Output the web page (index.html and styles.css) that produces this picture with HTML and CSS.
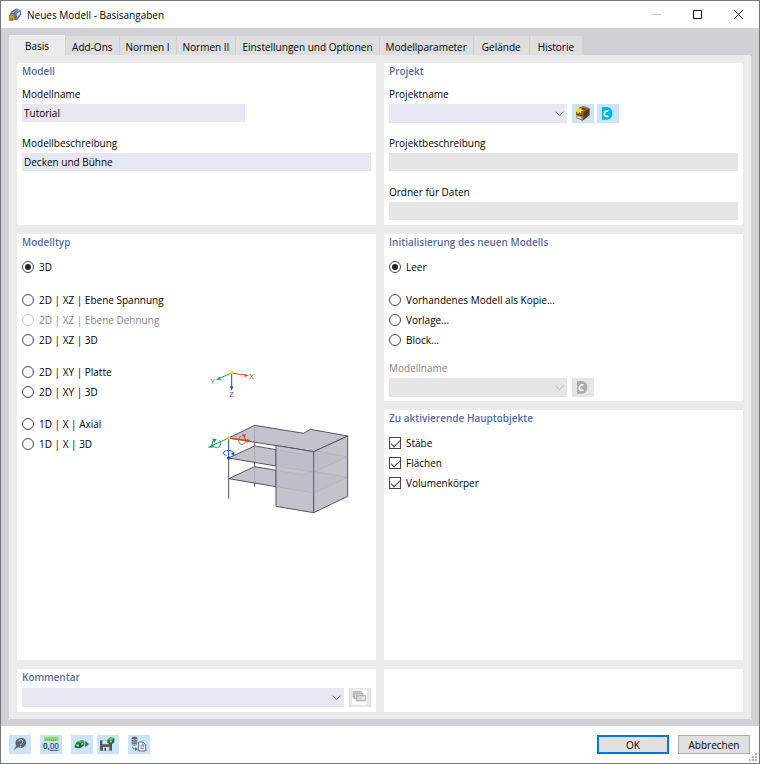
FILE: index.html
```html
<!DOCTYPE html>
<html lang="de">
<head>
<meta charset="utf-8">
<title>Neues Modell - Basisangaben</title>
<link rel="stylesheet" href="styles.css">
</head>
<body>
<div class="window">
  <header class="titlebar">
    <svg class="app-icon" viewBox="0 0 42 42" aria-hidden="true">
      <path d="M8 12 25 1l12 5 3 13-13 18-9-2L5 25z" fill="#526d96"/>
      <path d="M9 13 25 2l11 5-15 10z" fill="#91aaca"/>
      <path d="M22 18 36 8l3 11-12 17z" fill="#6884ae"/>
      <path d="m26 17 9-6 1 7-8 10z" fill="#d7e2ee"/>
      <path d="m12 13 12-8M17 16 29 7" stroke="#314b71" stroke-width="2"/>
      <path d="M2 24c4-7 13-8 17-3v15c-5 5-12 5-17 1z" fill="#d2a126"/>
      <path d="M5 24c3-3 8-3 11 0M7 31h7v5H7z" fill="none" stroke="#7c5a13" stroke-width="2"/>
    </svg>
    <h1>Neues Modell - Basisangaben</h1>
    <div class="window-controls">
      <button type="button" aria-label="Minimieren" disabled><svg viewBox="0 0 11 11"><path d="M1 5.500h9" stroke="#ccc"/></svg></button>
      <button type="button" aria-label="Maximieren"><svg viewBox="0 0 11 11"><path d="M1.500 1.500h8v8h-8z" fill="none" stroke="#111"/></svg></button>
      <button type="button" aria-label="Schließen"><svg viewBox="0 0 11 11"><path d="m1 1 9 9M10 1l-9 9" stroke="#111"/></svg></button>
    </div>
  </header>

  <main class="workspace">
    <nav class="tabs" role="tablist">
      <button type="button" role="tab" class="tab tab-active" aria-selected="true">Basis</button>
      <button type="button" role="tab" class="tab">Add-Ons</button>
      <button type="button" role="tab" class="tab">Normen I</button>
      <button type="button" role="tab" class="tab">Normen II</button>
      <button type="button" role="tab" class="tab">Einstellungen und Optionen</button>
      <button type="button" role="tab" class="tab">Modellparameter</button>
      <button type="button" role="tab" class="tab tab-wide">Gelände</button>
      <button type="button" role="tab" class="tab tab-wide">Historie</button>
    </nav>
    <div class="page">
      <div class="column">
        <section class="panel panel-top">
          <h2>Modell</h2>
          <div class="fields">
            <div class="field field-short"><label for="name">Modellname</label><input id="name" type="text" value="Tutorial"></div>
            <div class="field"><label for="desc">Modellbeschreibung</label><input id="desc" type="text" value="Decken und Bühne"></div>
          </div>
        </section>
        <section class="panel panel-grow">
          <h2>Modelltyp</h2>
          <div class="type-body">
            <div class="options">
              <div class="group group-first">
                <label class="option"><input type="radio" name="type" checked>3D</label>
              </div>
              <div class="group">
                <label class="option"><input type="radio" name="type">2D | XZ | Ebene Spannung</label>
                <label class="option option-disabled"><input type="radio" name="type" disabled>2D | XZ | Ebene Dehnung</label>
                <label class="option"><input type="radio" name="type">2D | XZ | 3D</label>
              </div>
              <div class="group">
                <label class="option"><input type="radio" name="type">2D | XY | Platte</label>
                <label class="option"><input type="radio" name="type">2D | XY | 3D</label>
              </div>
              <div class="group">
                <label class="option"><input type="radio" name="type">1D | X | Axial</label>
                <label class="option"><input type="radio" name="type">1D | X | 3D</label>
              </div>
            </div>
            <svg class="preview" viewBox="0 0 480 480" role="img" aria-label="Modellvorschau">
              <g fill="none" stroke-width="3">
                <path d="M95 39 60 54" stroke="#14a54e"/>
                <path d="m95 39 40 6" stroke="#d84a1f"/>
                <path d="M95 39v42" stroke="#1f49cf"/>
              </g>
              <path d="m48 60 11-10 4 9z" fill="#14a54e"/>
              <path d="m146 47-13 4 1-10z" fill="#d84a1f"/>
              <path d="m95 92-5-13h10z" fill="#1f49cf"/>
              <circle cx="95" cy="38" r="5" fill="#f5d800"/>
              <g class="axis-text">
                <text x="31" y="71" fill="#14a54e">Y</text>
                <text x="148" y="56" fill="#d84a1f">X</text>
                <text x="88" y="112" fill="#1f49cf">Z</text>
              </g>
              <path d="M164 196v184M86 356v60" stroke="#55556c" stroke-width="3"/>
              <g fill="#b9b8c3" fill-opacity=".85" stroke="#55556c" stroke-width="3" stroke-linejoin="round">
                <path d="m86 356 78-36 64 11v49z"/>
                <path d="m86 294 78-36 64 11v49z"/>
                <path d="m86 234 78-38 147 24 20-12 112 20-102 47z"/>
                <path d="m228 256 113 19v183l-113-19z"/>
                <path d="m341 275 102-47v181l-102 49z"/>
              </g>
              <g fill="#a3a2b2" fill-opacity=".15" stroke="#8e8d9e" stroke-opacity=".3" stroke-width="2">
                <path d="m228 269 83 13 20-12 112 20-102 47-113-19z"/>
                <path d="m228 331 83 13 20-12 112 20-102 47-113-19z"/>
              </g>
              <path d="M86 234v60" stroke="#1f49cf" stroke-width="3"/>
              <path d="M86 294v62" stroke="#55556c" stroke-width="3"/>
              <path d="M86 234 36 257" stroke="#14a54e" stroke-width="3"/>
              <path d="m86 234 60 8" stroke="#d84a1f" stroke-width="4"/>
              <path d="m24 264 12-12 5 10z" fill="#14a54e"/>
              <path d="m153 244-14 4 2-11z" fill="#d84a1f"/>
              <path d="M39 241c-6 11 0 22 10 22 12 0 17-14 9-22" fill="none" stroke="#14a54e" stroke-width="3"/>
              <path d="m36 236 14 1-7 11z" fill="#14a54e"/>
              <path d="M122 228c-8 10-7 25 3 25 10 1 16-12 10-18" fill="none" stroke="#d84a1f" stroke-width="3"/>
              <path d="m125 224 12-2-2 14z" fill="#d84a1f"/>
              <path d="M80 286c-14-2-14-11 0-14 10-2 19 1 21 7" fill="none" stroke="#1f49cf" stroke-width="3"/>
              <path d="m92 281 11-5v12z" fill="#1f49cf"/>
              <circle cx="86" cy="294" r="5" fill="#1f49cf"/>
              <circle cx="86" cy="234" r="5" fill="#f5d800"/>
            </svg>
          </div>
        </section>
        <section class="panel panel-bottom">
          <h2><label for="comment">Kommentar</label></h2>
          <div class="combo-row">
            <div class="combo combo-grow"><select id="comment"><option></option></select><svg viewBox="0 0 9 6"><path d="m.5.700 4 4 4-4"/></svg></div>
            <button type="button" class="icon-button icon-button-disabled" aria-label="Kommentare" disabled>
              <svg viewBox="0 0 66 57">
                <path d="M9 5h45v45H9z" fill="#fff"/>
                <g fill="#d4d4d4" stroke="#999" stroke-width="2"><path d="M12 10h25v17H12z"/><path d="M16 16h26v17H16z"/><path d="M23 22h27v17H23z"/></g>
                <path d="M39 28h8v7h-8z" fill="#eee"/>
              </svg>
            </button>
          </div>
        </section>
      </div>

      <div class="column">
        <section class="panel panel-top">
          <h2>Projekt</h2>
          <div class="fields">
            <div class="field">
              <label for="project">Projektname</label>
              <div class="combo-row">
                <div class="combo"><select id="project"><option></option></select><svg viewBox="0 0 9 6"><path d="m.5.700 4 4 4-4"/></svg></div>
                <button type="button" class="icon-button" aria-label="Neues Projekt">
                  <svg viewBox="0 0 66 57">
                    <path d="m12 23 19-15 22 6v20L32 50 12 42z" fill="#8c6536"/>
                    <path d="m22 10 13-4 17 6-17 11-16-6z" fill="#9c7443"/>
                    <path d="m35 23 17-10v20L34 48z" fill="#5a4023"/>
                    <path d="m12 30 20 5v13l-20-6z" fill="#c5a06a"/>
                    <path d="m13 31 19 5M37 30l14-9M26 12l16 4" stroke="#3d2b17" stroke-width="3"/>
                    <path d="m16 37 10 3v4l-10-3z" fill="#eee0bd"/>
                    <path d="m19 8 4 6 7-3-3 6 7 3-7 2 1 7-6-4-5 5-1-7-7-1 6-4-3-6 6 2z" fill="#f7e318"/>
                  </svg>
                </button>
                <button type="button" class="icon-button" aria-label="Dlubal Center">
                  <svg viewBox="0 0 66 57"><path d="M15 9h14c23 0 23 38 0 38H15z" fill="#00b6e6"/><path d="M34 21c-13-4-16 14-6 16 2 1 4 0 6-1" fill="none" stroke="#fff" stroke-width="5"/></svg>
                </button>
              </div>
            </div>
            <div class="field"><label for="pdesc">Projektbeschreibung</label><input id="pdesc" type="text" disabled></div>
            <div class="field"><label for="folder">Ordner für Daten</label><input id="folder" type="text" disabled></div>
          </div>
        </section>
        <section class="panel panel-init">
          <h2>Initialisierung des neuen Modells</h2>
          <div class="options">
            <div class="group group-first">
              <label class="option"><input type="radio" name="init" checked>Leer</label>
            </div>
            <div class="group">
              <label class="option"><input type="radio" name="init">Vorhandenes Modell als Kopie...</label>
              <label class="option"><input type="radio" name="init">Vorlage...</label>
              <label class="option"><input type="radio" name="init">Block...</label>
            </div>
          </div>
          <div class="field field-disabled">
            <label for="source">Modellname</label>
            <div class="combo-row">
              <div class="combo"><select id="source" disabled><option></option></select><svg viewBox="0 0 9 6"><path d="m.5.700 4 4 4-4"/></svg></div>
              <button type="button" class="icon-button icon-button-disabled" aria-label="Dlubal Center" disabled>
                <svg viewBox="0 0 66 57"><path d="M15 9h14c23 0 23 38 0 38H15z" fill="#ababab"/><path d="M34 21c-13-4-16 14-6 16 2 1 4 0 6-1" fill="none" stroke="#fff" stroke-width="5"/></svg>
              </button>
            </div>
          </div>
        </section>
        <section class="panel panel-grow">
          <h2>Zu aktivierende Hauptobjekte</h2>
          <div class="options">
            <label class="option"><input type="checkbox" checked>Stäbe</label>
            <label class="option"><input type="checkbox" checked>Flächen</label>
            <label class="option"><input type="checkbox" checked>Volumenkörper</label>
          </div>
        </section>
        <section class="panel panel-bottom"></section>
      </div>
    </div>
  </main>

  <footer class="footer">
    <div class="tools">
      <button type="button" class="icon-button" aria-label="Hilfe">
        <svg viewBox="0 0 66 57"><path d="M13 45 22 33c-8-14 4-26 16-25 17 1 18 25 2 30-5 2-9 1-13-1z" fill="#606468"/><path d="M29 19c2-8 15-5 12 3-1 4-6 4-6 9M34 34v4" fill="none" stroke="#d8eaf8" stroke-width="3"/></svg>
      </button>
      <button type="button" class="icon-button" aria-label="Einheiten">
        <svg viewBox="0 0 66 57"><path d="M12 5h43v13H12z" fill="#8edb6c"/><path d="M17 13v5m6-5v5m6-5v5m6-5v5m6-5v5m6-5v5" stroke="#4da13a" stroke-width="2"/><text class="unit-text" x="9" y="42" fill="#111">0,<tspan fill="#28519b">00</tspan></text><path d="M29 46h26" stroke="#28519b" stroke-width="3"/></svg>
      </button>
      <div class="tool-pair">
        <button type="button" class="icon-button" aria-label="Standard laden">
          <svg viewBox="0 0 66 57"><path d="m11 32 6-11 15-6 8 3v13l-13 9-16-2z" fill="#197536"/><path d="m18 21 14-6 8 3-12 6z" fill="#62b66f"/><path d="m16 27 8 2v6l-8-2zM30 26l7-4v5l-7 4z" fill="#a5d3ad"/><path d="M27 24v15" stroke="#0b4a22" stroke-width="2"/><path d="M43 17v20l10-10z" fill="#505458"/></svg>
        </button>
        <button type="button" class="icon-button" aria-label="Als Standard speichern">
          <svg viewBox="0 0 66 57"><path d="M9 16h30l6 7v24H9z" fill="#55595d"/><path d="M16 16h19v12H16zM18 36h19v11H18z" fill="#cfe5f7"/><path d="M22 38h5v9h-5z" fill="#55595d"/><path d="m31 14 9-7 12 2v13l-8 6-13-4z" fill="#197536"/><path d="m32 14 9-6 10 2-7 6z" fill="#75c37d"/><path d="M38 17h6v5h-6z" fill="#b8e1bc"/></svg>
        </button>
      </div>
      <button type="button" class="icon-button" aria-label="Daten übernehmen">
        <svg viewBox="0 0 66 57"><path d="M11 9c0-5 17-5 17 0v19c0 5-17 5-17 0z" fill="#66696c"/><path d="M11 13q9 4 17 0M11 20q9 4 17 0M11 27q9 4 17 0" stroke="#cfe5f7" stroke-width="2" fill="none"/><path d="M13 35q0 8 10 8" stroke="#66696c" stroke-width="3" fill="none"/><path d="m21 37 9 6-9 6z" fill="#66696c"/><path d="M32 21h13l8 8v19H32z" fill="#f4f7fa" stroke="#66696c" stroke-width="3"/><path d="M37 31h11M37 36h11M37 41h11M44 22v8h8" stroke="#66696c" stroke-width="2" fill="none"/></svg>
      </button>
    </div>
    <div class="actions">
      <button type="button" class="action action-default">OK</button>
      <button type="button" class="action">Abbrechen</button>
    </div>
    <svg class="grip" viewBox="0 0 8 8" aria-hidden="true"><path d="M6 0h2v2H6zM3 3h2v2H3zM6 3h2v2H6zM0 6h2v2H0zM3 6h2v2H3zM6 6h2v2H6z" fill="#b5b5b5"/></svg>
  </footer>
</div>
</body>
</html>
```
FILE: styles.css
```css
* {
  box-sizing: border-box;
}

body {
  margin: 0;
  font: 10px/16px "Open Sans", "Noto Sans", sans-serif;
  color: #000;
  background: #fff;
}

button,
input,
select {
  margin: 0;
  padding: 0;
  border: 0;
  border-radius: 0;
  font: inherit;
  color: inherit;
}

svg {
  display: block;
}

h1,
h2 {
  margin: 0;
  font-size: inherit;
}

.window {
  display: flex;
  flex-direction: column;
  min-height: 100vh;
  border: 1px solid #777;
}

.titlebar {
  display: flex;
  align-items: center;
  height: 27px;
  padding-left: 7px;
}

.app-icon {
  width: 14px;
  height: 14px;
}

.titlebar h1 {
  flex: 1;
  padding-left: 5px;
  font-weight: 500;
}

.window-controls {
  display: flex;
}

.window-controls button {
  display: grid;
  place-items: center;
  width: 41px;
  height: 26px;
  background: none;
}

.window-controls svg {
  width: 11px;
  height: 11px;
}

.workspace {
  flex: 1;
  display: flex;
  flex-direction: column;
  padding: 7px 8px;
  background: #d0d0d5;
}

.tabs {
  display: flex;
  align-items: flex-end;
  gap: 1px;
}

.tab {
  height: 19px;
  padding: 2px 6px 0;
  font-weight: 500;
  background: #dedede;
}

.tab-wide {
  padding: 2px 8px 0;
}

.tab-active {
  height: 20px;
  padding: 2px 16px 0;
  background: #ebebeb;
}

.page {
  flex: 1;
  display: grid;
  grid-template-columns: 1fr 1fr;
  gap: 8px;
  padding: 8px 8px 7px;
  background: #ebebeb;
}

.column {
  display: flex;
  flex-direction: column;
  gap: 9px;
}

.panel {
  padding: 0 5px;
  background: #fff;
}

.panel h2 {
  padding-bottom: 6px;
  line-height: 17px;
  font-weight: 600;
  color: #576c9b;
}

.panel-top {
  min-height: 162px;
}

.panel-init {
  padding-bottom: 4px;
}

.panel-grow {
  flex: 1;
}

.panel-bottom {
  min-height: 43px;
}

.panel-bottom h2 {
  padding-bottom: 2px;
}

.fields {
  display: flex;
  flex-direction: column;
  gap: 13px;
}

.field {
  display: flex;
  flex-direction: column;
  gap: 2px;
  font-weight: 500;
}

.field-short input {
  width: 64%;
}

.field-disabled {
  margin-top: 10px;
  color: #838383;
}

.field input {
  height: 18px;
  padding: 0 2px;
  background: #e7e7f3;
}

.field input:disabled {
  background: #e5e5e5;
}

.fields .combo-row {
  height: 18px;
}

.combo-row {
  display: flex;
  gap: 5px;
}

.combo-row .icon-button + .icon-button {
  margin-left: -2px;
}

.combo {
  position: relative;
  width: 178px;
}

.combo-grow {
  flex: 1;
}

.combo select {
  display: block;
  width: 100%;
  height: 19px;
  appearance: none;
  background: #e7e7f3;
}

.combo select:disabled {
  background: #e5e5e5;
  opacity: 1;
}

.combo svg {
  position: absolute;
  top: 7px;
  right: 3px;
  width: 9px;
  height: 6px;
  fill: none;
  stroke: #666;
  pointer-events: none;
}

.field-disabled .combo svg {
  stroke: #b5b5b5;
}

.icon-button {
  width: 22px;
  height: 19px;
  background: #cce4f7;
}

.icon-button svg {
  width: 22px;
  height: 19px;
}

.icon-button-disabled {
  background: #e5e5e5;
}

.type-body {
  display: flex;
  padding-right: 11px;
}

.type-body .options {
  flex: 1;
}

.preview {
  width: 160px;
  height: 160px;
  margin-top: 103px;
}

.axis-text {
  font: 22px "Liberation Sans", sans-serif;
}

.unit-text {
  font: 600 24px "Open Sans", sans-serif;
}

.group {
  margin-top: 12px;
}

.group-first {
  margin: 0 0 13px;
}

.option {
  display: flex;
  align-items: center;
  gap: 5px;
  height: 20px;
  font-weight: 500;
}

.option-disabled {
  color: #888;
}

.option input {
  appearance: none;
  display: grid;
  place-items: center;
  width: 12px;
  height: 12px;
  border: 1px solid #444;
  background: #fff;
}

.option input[type="radio"] {
  border-radius: 50%;
}

.option input[type="radio"]:checked::before {
  content: "";
  width: 6px;
  height: 6px;
  border-radius: 50%;
  background: #222;
}

.option input[type="checkbox"]:checked::before {
  content: "";
  width: 8px;
  height: 4px;
  margin-bottom: 2px;
  border: solid #333;
  border-width: 0 0 1px 1px;
  transform: rotate(-45deg);
}

.option input:disabled {
  border-color: #ccc;
}

.footer {
  position: relative;
  display: flex;
  justify-content: space-between;
  align-items: center;
  height: 37px;
  padding: 0 9px 0 8px;
}

.tools {
  display: flex;
  gap: 9px;
}

.tool-pair {
  display: flex;
  gap: 4px;
}

.actions {
  display: flex;
  gap: 9px;
}

.action {
  width: 72px;
  height: 19px;
  border: 1px solid #adadad;
  font-weight: 500;
  background: #e1e1e1;
}

.action-default {
  border: 2px solid #0078d7;
}

.grip {
  position: absolute;
  right: 2px;
  bottom: 2px;
  width: 8px;
  height: 8px;
}
```
